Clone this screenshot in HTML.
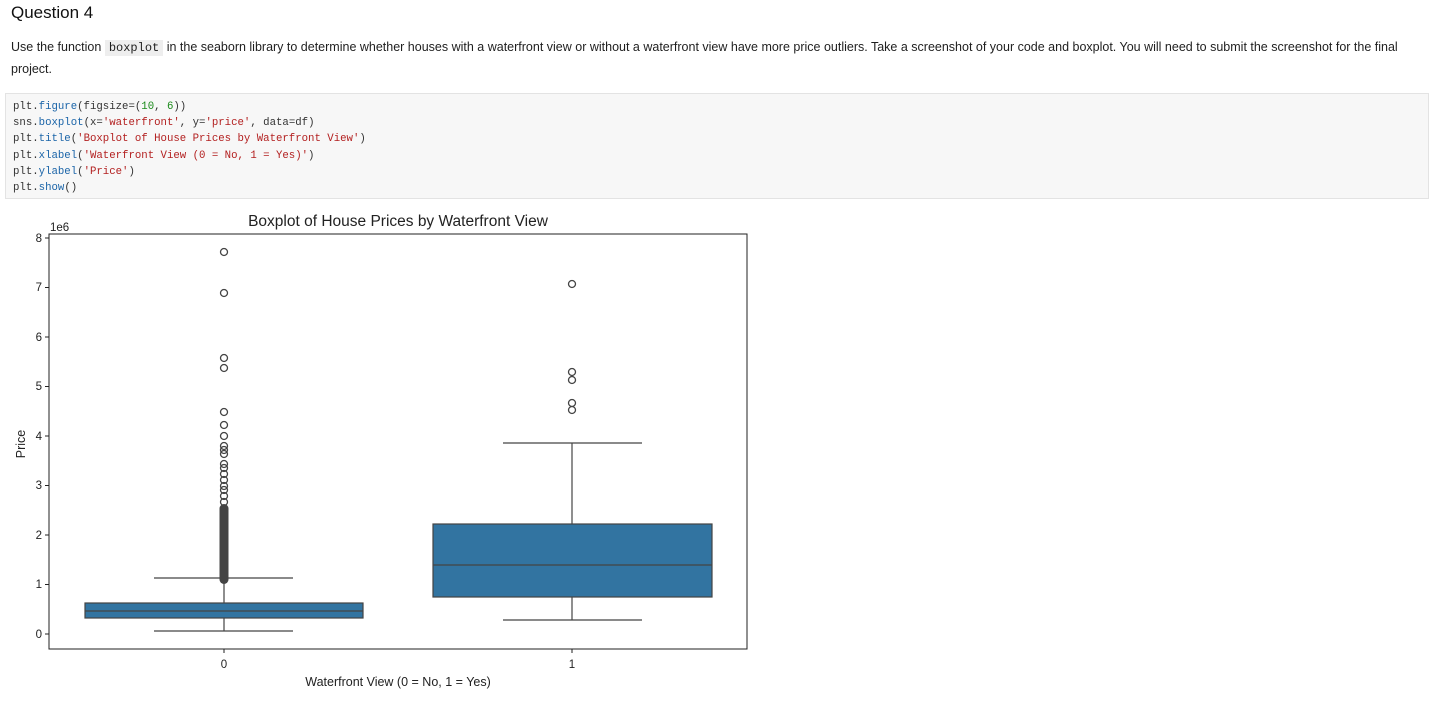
<!DOCTYPE html>
<html><head><style>
body{margin:0;background:#fff;font-family:"Liberation Sans",sans-serif;color:#1f1f1f;width:1429px;height:701px;overflow:hidden;position:relative}
h2{position:absolute;left:11px;top:3px;margin:0;font-size:17px;font-weight:normal;color:#111}
p{position:absolute;left:11px;top:37px;margin:0;font-size:12.5px;line-height:21px;width:1395px}
code.i{font-family:"Liberation Mono",monospace;background:#eee;padding:1px 4px;font-size:12px}
pre{position:absolute;left:5px;top:93px;width:1424px;height:106px;margin:0;background:#f7f7f7;border:1px solid #e3e3e3;box-sizing:border-box;padding:5px 7px;font-family:"Liberation Mono",monospace;font-size:10.7px;line-height:16.2px;color:#333}
.f{color:#1a64a8}.s{color:#b32020}.n{color:#1a8a1a}
</style></head><body>
<h2>Question 4</h2>
<p>Use the function <code class="i">boxplot</code> in the seaborn library to determine whether houses with a waterfront view or without a waterfront view have more price outliers. Take a screenshot of your code and boxplot. You will need to submit the screenshot for the final project.</p>
<pre>plt.<span class="f">figure</span>(figsize=(<span class="n">10</span>, <span class="n">6</span>))
sns.<span class="f">boxplot</span>(x=<span class="s">'waterfront'</span>, y=<span class="s">'price'</span>, data=df)
plt.<span class="f">title</span>(<span class="s">'Boxplot of House Prices by Waterfront View'</span>)
plt.<span class="f">xlabel</span>(<span class="s">'Waterfront View (0 = No, 1 = Yes)'</span>)
plt.<span class="f">ylabel</span>(<span class="s">'Price'</span>)
plt.<span class="f">show</span>()</pre>
<svg style="position:absolute;left:0;top:200px" width="760" height="501" viewBox="0 200 760 501" font-family="Liberation Sans, sans-serif" font-size="11.5" fill="#222">
<text x="398" y="226" font-size="15.5" text-anchor="middle">Boxplot of House Prices by Waterfront View</text>
<text x="50" y="231" font-size="11.5">1e6</text>
<rect x="49" y="234" width="698" height="415" fill="none" stroke="#222" stroke-width="1"/>
<g stroke="#222">
<line x1="45" x2="49" y1="238" y2="238"/><line x1="45" x2="49" y1="287.5" y2="287.5"/><line x1="45" x2="49" y1="337" y2="337"/><line x1="45" x2="49" y1="386.5" y2="386.5"/><line x1="45" x2="49" y1="436" y2="436"/><line x1="45" x2="49" y1="485.5" y2="485.5"/><line x1="45" x2="49" y1="535" y2="535"/><line x1="45" x2="49" y1="584.5" y2="584.5"/><line x1="45" x2="49" y1="634" y2="634"/>
<line x1="224" x2="224" y1="649" y2="653"/><line x1="572" x2="572" y1="649" y2="653"/>
</g>
<g text-anchor="end"><text x="42" y="242">8</text><text x="42" y="291">7</text><text x="42" y="341">6</text><text x="42" y="390">5</text><text x="42" y="440">4</text><text x="42" y="489">3</text><text x="42" y="539">2</text><text x="42" y="588">1</text><text x="42" y="638">0</text></g>
<text x="224" y="668" text-anchor="middle">0</text><text x="572" y="668" text-anchor="middle">1</text>
<text x="398" y="686" font-size="12.5" text-anchor="middle">Waterfront View (0 = No, 1 = Yes)</text>
<text transform="translate(25,444) rotate(-90)" font-size="12.5" text-anchor="middle">Price</text>
<g stroke="#444" stroke-width="1.2" fill="none">
<line x1="224" x2="224" y1="578" y2="603"/><line x1="154" x2="293" y1="578" y2="578"/>
<line x1="224" x2="224" y1="618" y2="631"/><line x1="154" x2="293" y1="631" y2="631"/>
<rect x="85" y="603" width="278" height="15" fill="#3274a1"/><line x1="85" x2="363" y1="611" y2="611"/>
<line x1="572" x2="572" y1="443" y2="524"/><line x1="503" x2="642" y1="443" y2="443"/>
<line x1="572" x2="572" y1="597" y2="620"/><line x1="503" x2="642" y1="620" y2="620"/>
<rect x="433" y="524" width="279" height="73" fill="#3274a1"/><line x1="433" x2="712" y1="565" y2="565"/>
<g stroke-width="1.3">
<circle cx="224" cy="252" r="3.5"/><circle cx="224" cy="293" r="3.5"/><circle cx="224" cy="358" r="3.5"/><circle cx="224" cy="368" r="3.5"/><circle cx="224" cy="412" r="3.5"/><circle cx="224" cy="425" r="3.5"/><circle cx="224" cy="436" r="3.5"/><circle cx="224" cy="446" r="3.5"/><circle cx="224" cy="450" r="3.5"/><circle cx="224" cy="454" r="3.5"/><circle cx="224" cy="464" r="3.5"/><circle cx="224" cy="468" r="3.5"/><circle cx="224" cy="474" r="3.5"/><circle cx="224" cy="480" r="3.5"/><circle cx="224" cy="486" r="3.5"/><circle cx="224" cy="490" r="3.5"/><circle cx="224" cy="496" r="3.5"/><circle cx="224" cy="502" r="3.5"/>
<circle cx="572" cy="284" r="3.5"/><circle cx="572" cy="372" r="3.5"/><circle cx="572" cy="380" r="3.5"/><circle cx="572" cy="403" r="3.5"/><circle cx="572" cy="410" r="3.5"/>
</g>
<rect x="219.5" y="504" width="9" height="80" rx="4.5" fill="#444" stroke="none"/>
</g>
</svg>
</body></html>
